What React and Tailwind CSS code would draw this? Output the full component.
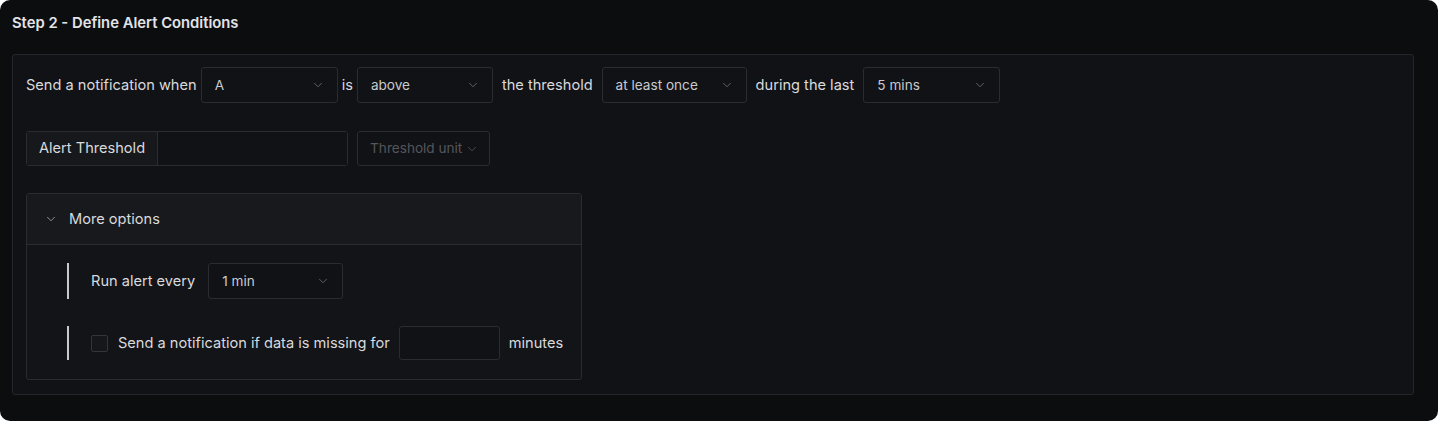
import { ChevronDown } from "lucide-react";

const Select = ({ value, width, muted }) => (
  <div
    className={`flex h-9 items-center justify-between rounded-[3px] border border-[#2b2c31] bg-[#111216] pl-[13px] pr-[12px] text-[13.6px] ${
      muted ? "text-[#5c5d62]" : "text-[#c9cace]"
    } ${width}`}
  >
    <span>{value}</span>
    <ChevronDown className="h-[14px] w-[14px] text-[#6a6b70]" strokeWidth={1.5} />
  </div>
);

const Label = ({ children }) => (
  <span className="pt-px text-[14.6px] text-[#d9dadd]">{children}</span>
);

const OptionRow = ({ children }) => (
  <div className="flex items-center border-l-2 border-[#c9c9cb] pl-[22px]">
    {children}
  </div>
);

export default function App() {
  return (
    <div className="h-[421px] w-[1438px] bg-white font-['Inter',sans-serif]">
      <div className="h-full rounded-[10px] bg-[#0c0d0f] pl-3 pr-6 pt-[13px]">
        <h2 className="text-[14.8px] leading-5 font-semibold text-[#e3e4e7]">
          Step 2 - Define Alert Conditions
        </h2>

        <div className="mt-[21px] rounded-[3px] border border-[#25262b] bg-[#111216] pb-[14px] pl-[13px] pt-3">
          {/* condition row */}
          <div className="flex items-center gap-1">
            <Label>Send a notification when</Label>
            <Select value="A" width="w-[137px]" />
            <Label>is</Label>
            <Select value="above" width="w-[136px]" />
            <span className="mx-[5px] pt-px text-[14.6px] text-[#d9dadd]">the threshold</span>
            <Select value="at least once" width="w-[145px]" />
            <span className="mx-[5px] pt-px text-[14.6px] text-[#d9dadd]">during the last</span>
            <Select value="5 mins" width="w-[137px]" />
          </div>

          {/* threshold row */}
          <div className="mt-[28px] flex items-center gap-[9px]">
            <div className="flex h-[35px] rounded-[3px] border border-[#2b2c31]">
              <div className="flex items-center border-r border-[#2b2c31] bg-[#17181c] px-[12px] pt-px text-[14.6px] text-[#d9dadd]">
                Alert Threshold
              </div>
              <div className="w-[189px] bg-[#111216]" />
            </div>
            <div className="flex h-[35px] w-[133px] items-center justify-between rounded-[3px] border border-[#2b2c31] bg-[#111216] pl-[12px] pr-[10px] text-[13.6px] text-[#55565b]">
              <span>Threshold unit</span>
              <ChevronDown className="h-[14px] w-[14px] text-[#55565b]" strokeWidth={1.5} />
            </div>
          </div>

          {/* more options */}
          <div className="mt-[27px] w-[556px] rounded-[3px] border border-[#2b2c31] bg-[#131418]">
            <div className="flex h-[51px] items-center border-b border-[#2b2c31] bg-[#18191d] pl-[17px] text-[14.6px] text-[#d9dadd]">
              <ChevronDown className="h-[14px] w-[14px] text-[#a0a1a5]" strokeWidth={1.5} />
              <span className="ml-[11px] pt-px">More options</span>
            </div>
            <div className="pb-[19px] pl-[40px] pt-[18px]">
              <OptionRow>
                <Label>Run alert every</Label>
                <div className="ml-[13px]">
                  <Select value="1 min" width="w-[135px]" />
                </div>
              </OptionRow>
              <div className="mt-[27px]">
                <OptionRow>
                  <div className="h-[34px]" />
                  <div className="h-[17px] w-[17px] rounded-[2px] border border-[#34353a] bg-[#16171b]" />
                  <span className="ml-[10px] pt-px text-[14.6px] text-[#d9dadd]">
                    Send a notification if data is missing for
                  </span>
                  <div className="ml-[9px] h-[34px] w-[101px] rounded-[3px] border border-[#2b2c31] bg-[#111216]" />
                  <span className="ml-[9px] pt-px text-[14.6px] text-[#d9dadd]">minutes</span>
                </OptionRow>
              </div>
            </div>
          </div>
        </div>
      </div>
    </div>
  );
}
